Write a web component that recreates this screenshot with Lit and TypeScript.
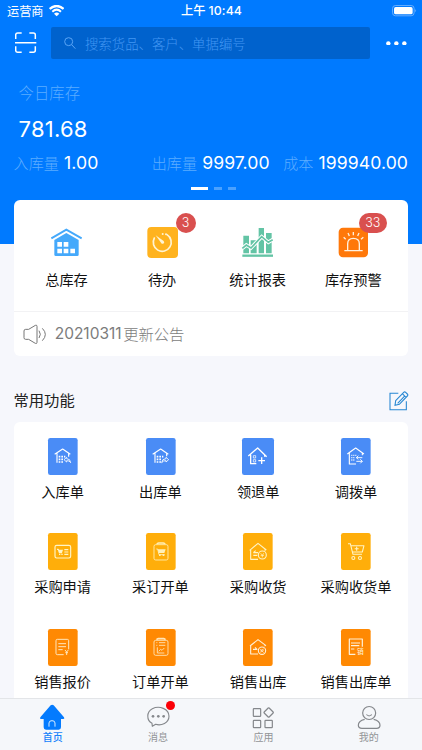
import { LitElement, html, css, svg, type TemplateResult, type SVGTemplateResult } from "lit";
import { customElement, property } from "lit/decorators.js";

interface Entry {
  label: string;
  box: string;
  art: SVGTemplateResult;
  badge?: string;
  active?: boolean;
}

const icon = (box: string, art: SVGTemplateResult): TemplateResult => {
  const [, , w, h] = box.split(" ").map(Number);
  return html`<svg viewBox=${box} width=${w / 3} height=${h / 3} fill="none" stroke-linejoin="round">${art}</svg>`;
};

const BLUE = "#4a8cf6";
const AMBER = "#ffae0a";
const ORANGE = "#ff8903";

const summary: Entry[] = [
  {
    label: "总库存",
    box: "150 96 99 96",
    art: svg`
      <path d="M154 130L199 104L245 130" stroke="#45a9fb" stroke-width="6" stroke-linejoin="miter"/>
      <path d="M163 135L199 114L236 135V179Q236 183 232 183H167Q163 183 163 179Z" fill="#45a9fb"/>
      <path d="M172 141h14v14h-14zM191 141h14v14h-14zM172 161h14v14h-14zM191 161h14v14h-14zM211 161h14v14h-14z" fill="#fff"/>`,
  },
  {
    label: "待办",
    box: "437 96 99 96",
    badge: "3",
    art: svg`
      <rect x="441" y="96" width="92" height="93" rx="12" fill="#ffb31f"/>
      <path d="M500 119A27 27 0 1 1 462 129" stroke="#fff4d4" stroke-width="5" stroke-linecap="round"/>
      <path d="M466 121L490 138Q494 143 489 146Q485 148 482 143Z" fill="#fff4d4"/>
      <circle cx="487" cy="117" r="3" fill="#fff4d4"/><circle cx="497" cy="118" r="3" fill="#fff4d4"/>`,
  },
  {
    label: "统计报表",
    box: "91 96 99 96",
    art: svg`
      <path d="M98 122h17v53H98zM120 136h18v39h-18zM144 99h16v76h-16zM166 114h17v61h-17z" fill="#63c4a5"/>
      <path d="M95 160L107 150L121 159L153 125L173 142L186 134" stroke="#fff" stroke-width="11" stroke-linejoin="miter"/>
      <path d="M95 160L107 150L121 159L153 125L173 142L186 134" stroke="#63c4a5" stroke-width="5" stroke-linejoin="miter"/>
      <path d="M95 182H187" stroke="#63c4a5" stroke-width="7"/>`,
  },
  {
    label: "库存预警",
    box: "378 96 99 96",
    badge: "33",
    art: svg`
      <rect x="383" y="98" width="88" height="89" rx="13" fill="#ff780a"/>
      <path d="M410 166V146Q410 130 427 130Q445 130 445 146V166M400 167H455" stroke="#fff1df" stroke-width="4"/>
      <path d="M398 127L404 133M411 114L415 123M427 111V121M444 114L440 123M457 127L450 133" stroke="#fff1df" stroke-width="4"/>`,
  },
];

const functions: Entry[] = [
  {
    label: "入库单",
    box: "143 174 89 111",
    art: svg`
      <rect x="143" y="174" width="89" height="111" rx="7" fill=${BLUE}/>
      <g stroke="#fff" stroke-width="3.400"><path d="M163 223L187 207L210 223M170 219V248M205 219V230"/>
      <path d="M175 230h5M183 230h5M191 230h4M175 238h5M183 238h5M175 246h5M183 246h5" stroke-width="5"/>
      <path d="M199 232L191 239L199 246V242Q207 241 211 248Q210 236 199 236Z" stroke-width="2.600"/></g>`,
  },
  {
    label: "出库单",
    box: "436 174 89 111",
    art: svg`
      <rect x="436" y="174" width="89" height="111" rx="7" fill=${BLUE}/>
      <g stroke="#fff" stroke-width="3.400"><path d="M456 223L480 207L503 223M463 219V248M498 219V229"/>
      <path d="M468 230h5M476 230h5M484 230h4M468 238h5M476 238h5M468 246h5M476 246h5" stroke-width="5"/>
      <path d="M496 232L504 239L496 246V242Q488 241 483 248Q484 236 496 236Z" stroke-width="2.600"/></g>`,
  },
  {
    label: "领退单",
    box: "93 174 96 111",
    art: svg`
      <rect x="93" y="174" width="96" height="111" rx="7" fill=${BLUE}/>
      <g stroke="#fff" stroke-width="4"><path d="M112 228L140 204L167 230M119 224V251H136M161 225V230"/>
      <path d="M142 242H162M152 232V252"/>
      <path d="M127 227h7v7h-7zM127 239h7v7h-7z" stroke-width="2.200"/></g>`,
  },
  {
    label: "调拨单",
    box: "390 174 89 111",
    art: svg`
      <rect x="390" y="174" width="89" height="111" rx="7" fill=${BLUE}/>
      <g stroke="#fff" stroke-width="3.300"><path d="M409 222L434 204L459 222M415 218V252H435M454 218V226"/>
      <path d="M421 226h3M427 226h3M433 226h3M421 233h3M427 233h3M421 240h3M427 240h3" stroke-width="4"/>
      <path d="M454 233H436L442 227M436 233L442 238M436 244H454L448 238M454 244L448 250" stroke-width="2.800"/></g>`,
  },
  {
    label: "采购申请",
    box: "143 39 89 111",
    art: svg`
      <rect x="143" y="39" width="89" height="111" rx="7" fill=${AMBER}/>
      <g stroke="#fff4c6" stroke-width="3.500"><rect x="164" y="76" width="47" height="38" rx="5"/>
      <path d="M170 88H174L177 98H185M192 89H204M192 96H204M192 103H204"/>
      <path d="M174 89H188L185 98H177ZM176 101h4v4h-4zM183 101h4v4h-4z" fill="#fff4c6" stroke="none"/></g>`,
  },
  {
    label: "采订开单",
    box: "436 39 89 111",
    art: svg`
      <rect x="436" y="39" width="89" height="111" rx="7" fill=${AMBER}/>
      <g stroke="#fff0b8" stroke-width="2.600"><rect x="460" y="74" width="42" height="46" rx="5"/>
      <path d="M469 72Q470 69 474 69H488Q492 69 493 72" stroke-width="5"/>
      <path d="M467 87H471L475 104H492"/>
      <path d="M471 88H495L491 99H474ZM475 103h5v5h-5zM486 103h5v5h-5z" fill="#fff0b8" stroke="none"/></g>`,
  },
  {
    label: "采购收货",
    box: "96 39 89 111",
    art: svg`
      <rect x="96" y="39" width="89" height="111" rx="7" fill=${AMBER}/>
      <g stroke="#fff4c6" stroke-width="3.300"><path d="M116 91L141 70L166 90M119 89V118H141M162 87V92"/>
      <path d="M127 98H141M127 98L134 92M127 106H139"/>
      <circle cx="154" cy="105" r="12"/><path d="M149 100L154 105L159 100M154 105V112M149 106H159" stroke-width="2.300"/></g>`,
  },
  {
    label: "采购收货单",
    box: "390 39 89 111",
    art: svg`
      <rect x="390" y="39" width="89" height="111" rx="7" fill=${AMBER}/>
      <g stroke="#fff4c6" stroke-width="3.200"><path d="M411 71H418L426 103H453M420 77H459L454 96H424M437 80V92M431 86H443"/>
      <circle cx="427" cy="114" r="4.500"/><circle cx="447" cy="114" r="4.500"/></g>`,
  },
  {
    label: "销售报价",
    box: "143 326 89 111",
    art: svg`
      <rect x="143" y="326" width="89" height="111" rx="7" fill=${ORANGE}/>
      <g stroke="#ffe9c4" stroke-width="2.900"><path d="M190 403H171Q167 403 167 399V361Q167 357 171 357H201Q205 357 205 361V387"/>
      <path d="M174 370H197M174 379H197M174 388H187M194 389L199 395L204 389M199 395V404M195 397H203"/></g>`,
  },
  {
    label: "订单开单",
    box: "436 326 89 111",
    art: svg`
      <rect x="436" y="326" width="89" height="111" rx="7" fill=${ORANGE}/>
      <g stroke="#ffe4b8" stroke-width="2.700"><rect x="460" y="360" width="42" height="45" rx="5"/>
      <path d="M468 358Q469 355 473 355H489Q493 355 494 358" stroke-width="5"/>
      <path d="M475 367H494M475 375H494M467 367h3M467 375h3M470 381V398H491M474 393L480 387L484 390L491 383"/></g>`,
  },
  {
    label: "销售出库",
    box: "96 326 89 111",
    art: svg`
      <rect x="96" y="326" width="89" height="111" rx="7" fill=${ORANGE}/>
      <g stroke="#fff0d8" stroke-width="3.300"><path d="M117 377L141 358L165 376M119 376V401H141M162 374V378"/>
      <path d="M126 387H138L132 381"/>
      <circle cx="153" cy="391" r="11"/><path d="M148 386L158 397M158 386L148 392M148 396L158 390" stroke-width="2.300"/></g>`,
  },
  {
    label: "销售出库单",
    box: "390 326 89 111",
    art: svg`
      <rect x="390" y="326" width="89" height="111" rx="7" fill=${ORANGE}/>
      <g stroke="#fff0d8" stroke-width="3.600"><path d="M433 402H415V356H454V379M420 368H447M420 376H445M420 386H430"/></g>
      <text x="438" y="401" class="glyph">销</text>`,
  },
];

const tabs: Entry[] = [
  {
    label: "首页",
    box: "105 36 110 90",
    active: true,
    art: svg`
      <path d="M155 46Q159.500 43 164 46L195 82Q198 87 193 87H186V112Q186 119 179 119H141Q134 119 134 112V87H126Q121 87 124 82Z" fill="#047bfe"/>
      <path d="M150 110V99Q150 92 159 92Q168 92 168 99V110" stroke="#d9ecff" stroke-width="3"/>`,
  },
  {
    label: "消息",
    box: "420 36 110 90",
    badge: "dot",
    art: svg`
      <path d="M456 100C439 91 439 65 457 56C478 46 507 56 507 79C507 99 484 108 467 103L457 109Z" stroke="#85888c" stroke-width="3.400"/>
      <g fill="#85888c"><circle cx="459" cy="79" r="4"/><circle cx="475" cy="79" r="4"/><circle cx="491" cy="79" r="4"/></g>`,
  },
  {
    label: "应用",
    box: "103 36 110 90",
    art: svg`
      <g stroke="#85888c" stroke-width="3.600"><rect x="128" y="56" width="22" height="23" rx="2"/>
      <rect x="128" y="91" width="22" height="22" rx="2"/><rect x="163" y="91" width="22" height="22" rx="2"/>
      <rect x="163.500" y="57" width="21" height="21" rx="2" transform="rotate(45 174 67.500)"/></g>`,
  },
  {
    label: "我的",
    box: "420 36 110 90",
    art: svg`
      <g stroke="#85888c" stroke-width="3.600"><circle cx="474.500" cy="69" r="19.500"/>
      <path d="M461 88C448 91 442 98 442 106Q442 115 453 115H497Q507 115 507 106C507 98 501 91 488 88"/>
      <path d="M466 74Q474 82 483 74" stroke-width="3"/></g>`,
  },
];

@customElement("icon-cell")
export class IconCell extends LitElement {
  @property({ attribute: false }) entry!: Entry;

  static styles = css`
    :host { display: flex; flex-direction: column; align-items: center; min-width: 0; }
    .art { position: relative; display: flex; }
    svg { display: block; overflow: visible; }
    .glyph { font: 500 20px "Noto Sans CJK SC", sans-serif; fill: #fff0d8; }
    .label {
      font: 400 14.2px/20px "Noto Sans CJK SC", sans-serif;
      color: #111; white-space: nowrap; margin-top: var(--label-gap, 6px);
    }
    .badge {
      position: absolute; left: 30px; top: -14px; height: 20px; min-width: 20px; box-sizing: border-box;
      padding: 0 6px; border-radius: 10px; background: #d9504f; color: #fff;
      font: 300 12.5px/20px Inter, sans-serif; text-align: center; white-space: nowrap;
    }
    .badge.wide { left: 22px; width: 28px; }
  `;

  render() {
    const e = this.entry;
    return html`
      <div class="art">
        ${icon(e.box, e.art)}
        ${e.badge ? html`<span class="badge ${e.badge.length > 1 ? "wide" : ""}">${e.badge}</span>` : null}
      </div>
      <div class="label">${e.label}</div>
    `;
  }
}

@customElement("tab-item")
export class TabItem extends LitElement {
  @property({ attribute: false }) entry!: Entry;

  static styles = css`
    :host { display: flex; flex-direction: column; align-items: center; }
    .art { position: relative; display: flex; }
    svg { display: block; }
    .label { font: 400 10px/11px "Noto Sans CJK SC", sans-serif; color: #929497; margin-top: -1px; }
    .label.active { color: #1482fb; font-weight: 500; }
    .dot { position: absolute; left: 26px; top: -1px; width: 9px; height: 9px; border-radius: 50%; background: #fb0007; }
  `;

  render() {
    const e = this.entry;
    return html`
      <div class="art">${icon(e.box, e.art)}${e.badge ? html`<span class="dot"></span>` : null}</div>
      <div class="label ${e.active ? "active" : ""}">${e.label}</div>
    `;
  }
}

@customElement("app-root")
export class AppRoot extends LitElement {
  static styles = css`
    :host {
      display: flex; flex-direction: column; width: 422px; height: 750px; overflow: hidden;
      background: #f6f7fc; font-family: Inter, "Noto Sans CJK SC", sans-serif; color: #111;
    }
    svg { display: block; }
    .hero { height: 244px; flex: none; background: #007aff; color: #fff; }
    .status { display: grid; grid-template-columns: 1fr auto 1fr; align-items: center; height: 22px; padding: 0 6px 0 7px; }
    .carrier { display: flex; align-items: center; gap: 5px; font: 400 12.2px/22px "Noto Sans CJK SC", sans-serif; }
    .clock { display: flex; gap: 3px; font: 500 12.3px/22px Inter, "Noto Sans CJK SC", sans-serif; }
    .time { letter-spacing: 0.1px; }
    .battery { justify-self: end; margin-right: -1px; }
    .searchbar { display: flex; align-items: center; height: 32px; margin-top: 5px; padding: 0 15px; }
    .field {
      display: flex; align-items: center; gap: 9px; width: 319.500px; height: 32px; box-sizing: border-box;
      margin-left: 14px; padding-left: 13.300px; border-radius: 2px; background: #0062cd;
      font: 300 13.400px/30px "Noto Sans CJK SC", sans-serif; color: #4297f3; white-space: nowrap;
    }
    .field span { padding-bottom: 1px; }
    .more { margin-left: auto; }
    .caption { color: #5cacff; font: 300 15.400px/22px "Noto Sans CJK SC", sans-serif; }
    .today { padding: 22px 0 0 18.500px; }
    .total { font-size: 22px; line-height: 26px; margin-top: 13px; letter-spacing: 0.250px; }
    .stats { display: flex; align-items: center; margin-top: 10px; padding: 0 14px 0 13.500px; height: 22px; white-space: nowrap; }
    .stat { display: flex; align-items: center; gap: 5px; font-size: 17.600px; line-height: 22px; letter-spacing: 0.080px; }
    .stat .caption { font-size: 15.100px; line-height: 20px; padding-bottom: 2px; }
    .stat:nth-child(2) { margin-left: auto; margin-right: 13.500px; }
    .pager { display: flex; justify-content: center; gap: 6px; margin: 12.500px 0 0 5px; }
    .page { width: 8px; height: 3px; background: #4aa1ff; }
    .page.on { width: 17px; background: #fff; }
    .card { width: 394.500px; margin-left: 13.700px; background: #fff; border-radius: 6px; flex: none; }
    .overview { margin-top: -44px; height: 156px; }
    .quick { display: grid; grid-template-columns: repeat(4, 95.600px); height: 111px; padding: 27px 0 0 5px; box-sizing: border-box; --label-gap: 10px; }
    .notice {
      display: flex; align-items: center; gap: 8px; height: 45px; box-sizing: border-box; padding-left: 9px;
      border-top: 1px solid #f2f2f4; color: #7c7c7c; font-size: 15.500px;
    }
    .message { display: flex; gap: 1.500px; align-items: center; line-height: 22px; padding-bottom: 1px; }
    .words { font: 300 15.300px/20px "Noto Sans CJK SC", sans-serif; padding-bottom: 2px; }
    .heading { display: flex; align-items: center; justify-content: space-between; height: 66px; flex: none; box-sizing: border-box; padding: 0 13.300px 0 13.500px; }
    .heading .title { font: 400 15.300px/22px "Noto Sans CJK SC", sans-serif; margin-top: 32px; align-self: flex-start; color: #222; }
    .heading .edit { margin-top: 35px; align-self: flex-start; }
    .functions { height: 276px; overflow: hidden; border-radius: 6px 6px 0 0; }
    .grid { display: grid; grid-template-columns: repeat(4, 97.800px); grid-auto-rows: 95.400px; padding-top: 16px; --label-gap: 5.700px; }
    .tabs {
      display: grid; grid-template-columns: repeat(4, 105.400px); height: 52px; flex: none; box-sizing: border-box;
      border-top: 1px solid #e3e5e8; background: #f5f7fa; padding-top: 3px;
    }
  `;

  render() {
    return html`
      <header class="hero">
        <div class="status">
          <div class="carrier">
            <span>运营商</span>
            <svg viewBox="0 0 46 34" width="15.300" height="11.300" fill="none" stroke="#fff">
              <path d="M2 12Q23 -6 44 12" stroke-width="7"/><path d="M10 20Q23 8 36 20" stroke-width="6"/>
              <path d="M15 26Q23 19 31 26L23 34Z" fill="#fff" stroke="none"/>
            </svg>
          </div>
          <div class="clock"><span>上午</span><span class="time">10:44</span></div>
          <svg class="battery" viewBox="0 0 75 34" width="25" height="11.300" fill="none">
            <rect x="1.500" y="1.500" width="65" height="31" rx="9" stroke="#79b8ff" stroke-width="2.500"/>
            <rect x="6" y="6" width="56" height="22" rx="5" fill="#fff"/><path d="M70 12Q75 17 70 22Z" fill="#79b8ff"/>
          </svg>
        </div>
        <div class="searchbar">
          <svg viewBox="45 97 65 64" width="21.700" height="21.300" fill="none" stroke="#fff" stroke-width="4.500">
            <path d="M47 118V106Q47 100 53 100H65M88 100H100Q106 100 106 106V118M106 140V152Q106 158 100 158H88M65 158H53Q47 158 47 152V140M45 129H109"/>
          </svg>
          <div class="field">
            <svg viewBox="0 0 36 36" width="12" height="12" fill="none" stroke="#5ba5f5" stroke-width="3">
              <circle cx="14" cy="14" r="12"/><path d="M23 23L34 35"/>
            </svg>
            <span>搜索货品、客户、单据编号</span>
          </div>
          <svg class="more" viewBox="0 0 62 14" width="20.700" height="4.700" fill="#fff">
            <circle cx="7" cy="7" r="6.500"/><circle cx="31" cy="7" r="6.500"/><circle cx="55" cy="7" r="6.500"/>
          </svg>
        </div>
        <div class="today">
          <div class="caption">今日库存</div>
          <div class="total">781.68</div>
        </div>
        <div class="stats">
          <div class="stat"><span class="caption">入库量</span><span>1.00</span></div>
          <div class="stat"><span class="caption">出库量</span><span>9997.00</span></div>
          <div class="stat"><span class="caption">成本</span><span>199940.00</span></div>
        </div>
        <div class="pager"><span class="page on"></span><span class="page"></span><span class="page"></span></div>
      </header>

      <section class="card overview">
        <div class="quick">${summary.map((e) => html`<icon-cell .entry=${e}></icon-cell>`)}</div>
        <div class="notice">
          <svg viewBox="69 384 72 62" width="24" height="20.700" fill="none" stroke="#777" stroke-width="3" stroke-linejoin="round">
            <path d="M86 400L106 388Q111 386 111 391V439Q111 444 106 442L86 430H77Q72 430 72 425V405Q72 400 77 400ZM117 404Q125 415 117 426M127 397Q145 415 127 434"/>
          </svg>
          <div class="message"><span>20210311</span><span class="words">更新公告</span></div>
        </div>
      </section>

      <div class="heading">
        <span class="title">常用功能</span>
        <svg class="edit" viewBox="533 33 60 60" width="20" height="20" fill="none" stroke="#2787d2" stroke-width="3.200">
          <path d="M561 40H536V89H585V64M553 62L577 37Q580 34 583 37L588 42Q591 45 588 48L564 73L551 76ZM573 41L584 52M559 70L579 49"/>
        </svg>
      </div>

      <section class="card functions">
        <div class="grid">${functions.map((e) => html`<icon-cell .entry=${e}></icon-cell>`)}</div>
      </section>

      <nav class="tabs">${tabs.map((e) => html`<tab-item .entry=${e}></tab-item>`)}</nav>
    `;
  }
}
